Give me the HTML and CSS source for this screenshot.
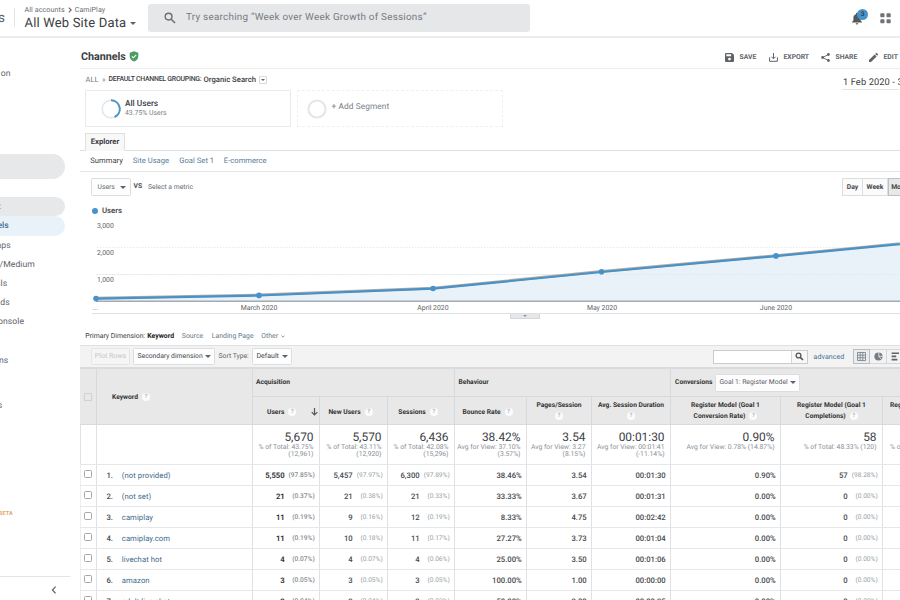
FILE: index.html
```html
<!DOCTYPE html>
<html lang="en">
<head>
<meta charset="utf-8">
<title>Analytics</title>
<link rel="stylesheet" href="styles.css">
</head>
<body>
<header class="top">
  <div class="brand"><span>s</span></div>
  <div class="account">
    <div class="crumb">All accounts <svg width="4" height="6" viewBox="0 0 4 6"><path d="M.8.6 3.2 3 .8 5.4" fill="none" stroke="#5f6368" stroke-width="1.1"/></svg> CamiPlay</div>
    <div class="view">All Web Site Data<i class="caret"></i></div>
  </div>
  <div class="search">
    <svg width="12" height="12" viewBox="0 0 12 12"><circle cx="4.6" cy="4.6" r="3.4" fill="none" stroke="#6b6f73" stroke-width="1.4"/><path d="M7.2 7.2 11 11" stroke="#6b6f73" stroke-width="1.6"/></svg>
    <span>Try searching “Week over Week Growth of Sessions”</span>
  </div>
  <div class="bell">
    <svg width="12" height="13" viewBox="0 0 12 13"><path d="M6 .8c.6 0 1 .4 1 1v.4C8.700 2.600 9.600 4 9.600 5.700V8.600L11 10v.6H1V10L2.400 8.600V5.700C2.400 4 3.300 2.600 5 2.200v-.4c0-.6.4-1 1-1ZM4.700 11.200h2.600a1.300 1.300 0 0 1-2.600 0Z" fill="#54585c"/></svg>
    <b>3</b>
  </div>
  <svg class="apps" width="11" height="11" viewBox="0 0 11 11" fill="#6f7377"><rect x=".3" y=".3" width="4.200" height="4" rx=".8"/><rect x="6.500" y=".3" width="4.200" height="4" rx=".8"/><rect x=".3" y="6.300" width="4.200" height="4" rx=".8"/><rect x="6.500" y="6.300" width="4.200" height="4" rx=".8"/></svg>
</header>
<div class="body">
  <nav class="side">
    <a class="w-on custom">on</a>
    <div class="pill"></div>
    <a class="parent"><span>:</span></a>
    <a class="active">els</a>
    <a class="w-on">aps</a>
    <a class="w-medium">/Medium</a>
    <a class="w-als">als</a>
    <a class="w-ds">ds</a>
    <a class="w-onsole">onsole</a>
    <a class="w-els campaigns">ns</a>
    <a class="w-s last">s</a>
    <em>BETA</em>
    <div class="collapse"><svg width="6" height="8" viewBox="0 0 6 8"><path d="M4.600.7 1.400 4l3.200 3.300" fill="none" stroke="#5f6368" stroke-width="1.2"/></svg></div>
  </nav>
  <main>
    <div class="titlebar">
      <h1>Channels</h1>
      <svg class="shield" width="10" height="11" viewBox="0 0 10 11"><path d="M5 .3 9.300 1.800V5c0 2.700-1.800 4.800-4.300 5.600C2.500 9.800.7 7.700.7 5V1.800Z" fill="#4a9d63"/><path d="M2.900 5.400 4.400 6.800 7.200 3.900" stroke="#fff" stroke-width="1.100" fill="none"/></svg>
      <div class="actions">
        <span class="a-save"><svg width="9" height="9" viewBox="0 0 9 9"><path fill-rule="evenodd" d="M1 0h6l2 2v6a1 1 0 0 1-1 1H1a1 1 0 0 1-1-1V1a1 1 0 0 1 1-1Zm.3 1.200v2h4.800v-2ZM4.500 4.700a1.400 1.400 0 1 0 0 2.800 1.400 1.400 0 0 0 0-2.800Z" fill="#5f6368"/></svg>SAVE</span>
        <span class="a-export"><svg width="9" height="9" viewBox="0 0 9 9"><path d="M4.500 0v5.600M2.400 3.700l2.100 2.100 2.100-2.100M1 4.600H.6v3.700h7.800V4.600H8" fill="none" stroke="#5f6368" stroke-width="1"/></svg>EXPORT</span>
        <span class="a-share"><svg width="9" height="9" viewBox="0 0 9 9"><path d="M7.400 1.500 1.700 4.500l5.700 3" fill="none" stroke="#5f6368" stroke-width=".9"/><circle cx="7.400" cy="1.500" r="1.400" fill="#5f6368"/><circle cx="1.600" cy="4.500" r="1.400" fill="#5f6368"/><circle cx="7.400" cy="7.500" r="1.400" fill="#5f6368"/></svg>SHARE</span>
        <span class="a-edit"><svg width="9" height="9" viewBox="0 0 9 9"><path d="M0 9V7l5.600-5.600 2 2L2 9ZM6.200.9 7 .1q.4-.2.800 0L8.900 1.200q.2.400 0 .8l-.8.8Z" fill="#5f6368"/></svg>EDIT</span>
      </div>
    </div>
    <div class="overview">
      <div class="left">
        <div class="path"><span class="all">ALL</span><span class="raq">»</span><span class="grouping">DEFAULT CHANNEL GROUPING:</span><b>Organic Search</b><span class="drop"><i class="caret"></i></span></div>
        <div class="segments">
          <div class="seg"><svg width="20" height="20" viewBox="0 0 20 20"><circle cx="10" cy="10" r="8.800" fill="none" stroke="#e2e4e6" stroke-width="1.500"/><path d="M10 1.200A8.800 8.800 0 0 1 13.600 18" fill="none" stroke="#4a94c9" stroke-width="2"/></svg><div><strong>All Users</strong><small>43.75% Users</small></div></div>
          <div class="seg add"><svg width="20" height="20" viewBox="0 0 20 20"><circle cx="10" cy="10" r="8.600" fill="none" stroke="#e4e5e6" stroke-width="2"/></svg><span>+ Add Segment</span></div>
        </div>
      </div>
      <div class="date">1 Feb 2020 - 3</div>
    </div>
    <div class="tabs"><span>Explorer</span></div>
    <div class="subnav"><span class="s1">Summary</span><a class="s2">Site Usage</a><a class="s3">Goal Set 1</a><a class="s4">E-commerce</a></div>
    <div class="controls">
      <span class="btn metric">Users<i class="caret"></i></span><b>VS</b><span class="sel">Select a metric</span>
      <div class="period"><span>Day</span><span class="week">Week</span><span class="on">Month</span></div>
    </div>
    <div class="legend"><i></i>Users</div>
    <svg class="chart" width="820" height="95" viewBox="80 218 820 95">
      <g stroke="#e9eaeb" stroke-dasharray="1.500 1.500"><path d="M97 247.500H920M97 274.500H920"/></g>
      <path d="M96 298.500 259 295.300 433 288.500 601.500 271.800 776 255.900 950 239V301H96Z" fill="#e9f1f9"/>
      <path d="M96 274.500H920" stroke="#dadfe4" stroke-dasharray="1.500 1.500" opacity=".6"/>
      <path d="M96 301.300H920" stroke="#a5aab1" stroke-width="1.400"/>
      <path d="M96 298.100 259 294.900 433 288.100 601.500 271.400 776 255.500 950 238.600" fill="none" stroke="#b7aba3" stroke-width="2.600"/>
      <path d="M96 298.700 259 295.500 433 288.700 601.500 272 776 256.100 950 239.200" fill="none" stroke="#4792c8" stroke-width="2.200"/>
      <g fill="#4792c8"><circle cx="96" cy="298.600" r="2.800"/><circle cx="259" cy="295.400" r="2.800"/><circle cx="433" cy="288.500" r="2.800"/><circle cx="601.500" cy="271.800" r="2.800"/><circle cx="776" cy="255.900" r="2.800"/></g>
      <g class="tick"><text x="97" y="228.300">3,000</text><text x="97" y="255.300">2,000</text><text x="97" y="282.300">1,000</text><text x="92.500" y="309.500">...</text></g>
      <g class="tick mid"><text x="259" y="310">March 2020</text><text x="433" y="310">April 2020</text><text x="602" y="310">May 2020</text><text x="776" y="310">June 2020</text></g>
    </svg>
    <div class="handle"><span><i class="caret"></i></span></div>
    <div class="dims"><span class="d0">Primary Dimension:</span><b>Keyword</b><a class="d2">Source</a><a class="d3">Landing Page</a><a class="d4">Other <svg width="4" height="3" viewBox="0 0 4 3"><path d="M.4.6 2 2.200 3.600.6" fill="none" stroke="#6b7a88" stroke-width=".8"/></svg></a></div>
    <div class="toolbar">
      <span class="btn plot">Plot Rows</span><span class="btn second">Secondary dimension<i class="caret"></i></span><span class="sort">Sort Type:</span><span class="btn deflt">Default<i class="caret"></i></span>
      <div class="find"><div></div><span><svg width="9" height="9" viewBox="0 0 9 9"><circle cx="3.500" cy="3.500" r="2.400" fill="none" stroke="#555" stroke-width="1.300"/><path d="M5.300 5.300 8 8" stroke="#555" stroke-width="1.700"/></svg></span></div>
      <a>advanced</a>
      <div class="modes">
        <span class="on"><svg width="9" height="9" viewBox="0 0 9 9"><path d="M.5.500h8v8h-8ZM.5 3.200h8M.5 5.800h8M3.200.5v8M5.800.5v8" fill="none" stroke="#7f868c" stroke-width=".9"/></svg></span>
        <span><svg width="9" height="9" viewBox="0 0 9 9"><circle cx="4.500" cy="4.500" r="4.100" fill="#777c81"/><path d="M4.800.300v4h4M4.800 4.300 7.500 7.500" fill="none" stroke="#f4f4f4" stroke-width=".8"/></svg></span>
        <span><svg width="9" height="9" viewBox="0 0 9 9"><path d="M.6 1.200h7.400M.6 4.400h4.600M.6 7.600h5.800" stroke="#5f6468" stroke-width="1.600"/></svg></span>
      </div>
    </div>
    <div class="thead">
      <div class="chk"><i class="box"></i></div>
      <div class="kw">Keyword<q>?</q></div>
      <div class="grp acq">Acquisition</div>
      <div class="grp beh">Behaviour</div>
      <div class="grp conv">Conversions<span class="btn goal">Goal 1: Register Model<i class="caret"></i></span></div>
      <div class="h users">Users<q>?</q><svg width="7" height="8" viewBox="0 0 7 8"><path d="M3.500 0v6.800M.7 4.200l2.800 2.800 2.800-2.800" fill="none" stroke="#54585c" stroke-width="1.200"/></svg></div>
      <div class="h newu">New Users<q>?</q></div>
      <div class="h newu">Sessions<q>?</q></div>
      <div class="h bounce">Bounce Rate<q>?</q></div>
      <div class="h two"><span>Pages/Session</span><q>?</q></div>
      <div class="h two"><span>Avg. Session Duration</span><q>?</q></div>
      <div class="h two"><span>Register Model (Goal 1</span><span>Conversion Rate)<q>?</q></span></div>
      <div class="h two"><span>Register Model (Goal 1</span><span>Completions)<q>?</q></span></div>
      <div class="h two cut"><span>Reg</span></div>
    </div>
    <div class="row sum">
      <div></div><div></div>
      <div><b>5,670</b><small>% of Total: 43.75%</small><small>(12,961)</small></div>
      <div><b>5,570</b><small>% of Total: 43.11%</small><small>(12,920)</small></div>
      <div><b>6,436</b><small>% of Total: 42.08%</small><small>(15,296)</small></div>
      <div><b>38.42%</b><small>Avg for View: 37.10%</small><small>(3.57%)</small></div>
      <div><b>3.54</b><small>Avg for View: 3.27</small><small>(8.15%)</small></div>
      <div><b>00:01:30</b><small>Avg for View: 00:01:41</small><small>(-11.14%)</small></div>
      <div><b>0.90%</b><small>Avg for View: 0.78% (14.87%)</small></div>
      <div><b>58</b><small>% of Total: 48.33% (120)</small></div>
      <div class="cut"><b>&nbsp;</b><small>% o</small></div>
    </div>
    <div class="row"><div class="c"><i class="box"></i></div><div class="k"><b>1.</b><a>(not provided)</a></div><div class="m">5,550<s>(97.85%)</s></div><div>5,457<s>(97.97%)</s></div><div>6,300<s>(97.89%)</s></div><div>38.46%</div><div>3.54</div><div>00:01:30</div><div>0.90%</div><div>57<s>(98.28%)</s></div><div></div></div>
    <div class="row"><div class="c"><i class="box"></i></div><div class="k"><b>2.</b><a>(not set)</a></div><div class="m">21<s>(0.37%)</s></div><div>21<s>(0.38%)</s></div><div>21<s>(0.33%)</s></div><div>33.33%</div><div>3.67</div><div>00:01:31</div><div>0.00%</div><div>0<s>(0.00%)</s></div><div></div></div>
    <div class="row"><div class="c"><i class="box"></i></div><div class="k"><b>3.</b><a>camiplay</a></div><div class="m">11<s>(0.19%)</s></div><div>9<s>(0.16%)</s></div><div>12<s>(0.19%)</s></div><div>8.33%</div><div>4.75</div><div>00:02:42</div><div>0.00%</div><div>0<s>(0.00%)</s></div><div></div></div>
    <div class="row"><div class="c"><i class="box"></i></div><div class="k"><b>4.</b><a>camiplay.com</a></div><div class="m">11<s>(0.19%)</s></div><div>10<s>(0.18%)</s></div><div>11<s>(0.17%)</s></div><div>27.27%</div><div>3.73</div><div>00:01:04</div><div>0.00%</div><div>0<s>(0.00%)</s></div><div></div></div>
    <div class="row"><div class="c"><i class="box"></i></div><div class="k"><b>5.</b><a>livechat hot</a></div><div class="m">4<s>(0.07%)</s></div><div>4<s>(0.07%)</s></div><div>4<s>(0.06%)</s></div><div>25.00%</div><div>3.50</div><div>00:01:06</div><div>0.00%</div><div>0<s>(0.00%)</s></div><div></div></div>
    <div class="row"><div class="c"><i class="box"></i></div><div class="k"><b>6.</b><a>amazon</a></div><div class="m">3<s>(0.05%)</s></div><div>3<s>(0.05%)</s></div><div>3<s>(0.05%)</s></div><div>100.00%</div><div>1.00</div><div>00:00:00</div><div>0.00%</div><div>0<s>(0.00%)</s></div><div></div></div>
    <div class="row"><div class="c"><i class="box"></i></div><div class="k"><b>7.</b><a>adult live chat</a></div><div class="m">2<s>(0.04%)</s></div><div>2<s>(0.04%)</s></div><div>2<s>(0.03%)</s></div><div>50.00%</div><div>2.00</div><div>00:00:35</div><div>0.00%</div><div>0<s>(0.00%)</s></div><div></div></div>
  </main>
</div>
</body>
</html>
```
FILE: styles.css
```css
* { box-sizing: border-box; }
html, body { margin: 0; height: 600px; overflow: hidden; }
body { width: 900px; background: #fff; color: #3c4043; font: 7.5px/1 Roboto, "Liberation Sans", sans-serif; white-space: nowrap; text-rendering: geometricPrecision; }
svg { display: block; flex: none; }
i.caret { display: inline-block; flex: none; border: 3px solid transparent; border-top: 3px solid #5f6368; border-bottom: 0; }
s, q { text-decoration: none; quotes: none; }
q::before, q::after { content: none; }

/* Top bar */
.top { height: 38px; display: flex; border-bottom: 2px solid #ededee; }
.brand { width: 15px; height: 19px; margin-top: 8px; border-right: 1px solid #e3e4e6; font-size: 13.5px; line-height: 21px; color: #5f6368; }
.brand span { margin-left: -2px; }
.account { width: 133px; padding: 5px 0 0 9.500px; }
.crumb { display: flex; align-items: center; gap: 3px; height: 9px; font-size: 7.1px; letter-spacing: .1px; color: #666b70; }
.view { display: flex; align-items: center; height: 18px; font-size: 13px; letter-spacing: .17px; color: #3c4043; }
.view .caret { margin-left: 4px; }
.search { width: 382px; height: 28px; margin-top: 4px; display: flex; align-items: center; gap: 10px; padding-left: 16px; border-radius: 3px; background: #e6e7e9; color: #757a7f; font-size: 9.9px; letter-spacing: .25px; }
.bell { position: relative; margin: 12px 0 0 321px; width: 18px; }
.bell b { position: absolute; left: 6px; top: -3.500px; width: 11px; height: 11px; border-radius: 50%; background: #4792c8; color: #34434f; font-size: 6.5px; line-height: 11px; text-align: center; }
.apps { margin: 13px 0 0 10.500px; }

.body { display: flex; height: 562px; }

/* Side navigation */
.side { width: 79px; flex: none; display: flex; flex-direction: column; align-items: flex-start; font-size: 8.6px; letter-spacing: .1px; color: #5f6368; }
.side a { height: 19.200px; flex: none; display: flex; align-items: center; justify-content: flex-end; padding-top: 1.500px; }
.side .custom { margin-top: 25.500px; }
.side .w-on { width: 10.700px; }
.side .w-els { width: 8.300px; }
.side .w-medium { width: 35px; }
.side .w-als { width: 7.300px; }
.side .w-ds { width: 9.800px; }
.side .w-onsole { width: 24.200px; }
.side .w-s { width: 2.200px; }
.pill { width: 65px; height: 25px; flex: none; margin-top: 71.500px; border-radius: 0 13px 13px 0; background: #e7e8e9; }
.side .parent { width: 65px; margin-top: 18px; justify-content: flex-start; border-radius: 0 10px 10px 0; background: #e7e8e9; }
.parent span { margin-left: -1px; }
.side .active { width: 65px; border-radius: 0 10px 10px 0; background: #e9f1f9; color: #3d6f96; font-weight: 500; letter-spacing: -.1px; padding-right: 56.500px; }
.side .campaigns { margin-top: 19px; }
.side .last { margin-top: 26.500px; }
.side em { width: 12.700px; height: 6px; flex: none; margin-top: 96px; display: flex; justify-content: flex-end; font: 700 5.5px/6px Roboto, sans-serif; color: #e5a76c; }
.collapse { width: 70px; margin-top: 58.500px; border-top: 1px solid #e3e4e6; padding: 9px 0 0 51px; }

/* Report header */
main { width: 821px; flex: none; overflow: hidden; padding-left: 1px; }
.titlebar { height: 31px; display: flex; align-items: center; border-bottom: 1px solid #ececec; padding: 7px 0 0 1px; }
h1 { width: 45px; margin: 1px 0 0; font-size: 10.800px; font-weight: 700; letter-spacing: -.05px; color: #3c4043; }
.shield { margin-left: 3px; margin-top: -1px; }
.actions { display: flex; flex: none; margin-left: 585.500px; padding-top: 1px; font-size: 6.8px; font-weight: 700; color: #5f6368; }
.actions span { display: flex; align-items: center; gap: 6px; }
.a-save { width: 44px; }
.a-export { width: 52px; }
.a-share { width: 48px; }
.overview { height: 64px; display: flex; }
.left { width: 763px; flex: none; }
.path { height: 21px; display: flex; align-items: center; padding-left: 5.500px; font-size: 7.5px; }
.path > * { flex: none; }
.all { width: 16.500px; color: #757a7f; }
.raq { width: 6.500px; color: #757a7f; }
.grouping { width: 95px; font-weight: 500; font-size: 6.900px; letter-spacing: -.22px; }
.path b { width: 55px; font-weight: 500; font-size: 7.7px; }
.path .drop { width: 8px; height: 8px; display: grid; place-items: center; border: 1px solid #d8d9da; border-radius: 1px; }
.drop .caret { border-width: 2px 2px 0; }
.segments { display: flex; gap: 6px; padding-left: 5px; }
.seg { width: 206px; height: 37px; display: flex; align-items: center; gap: 4.500px; padding-left: 14.500px; border: 1px solid #e8e9ea; border-radius: 1px; }
.seg strong { display: block; font-size: 8.3px; font-weight: 500; line-height: 9px; margin-top: 1px; }
.seg small { display: block; font-size: 6.900px; line-height: 9px; color: #757f87; }
.seg.add { border: 1px dashed #f0f0f0; padding-left: 9px; font-size: 8.3px; color: #75818b; letter-spacing: .1px; }
.seg.add span { margin-top: -2px; }
.date { width: 57px; height: 21px; padding: 8.500px 0 0 1px; margin-left: -1px; border-bottom: 1px solid #e5e5e5; font-size: 9.300px; letter-spacing: .1px; flex: none; }
.tabs { height: 18px; display: flex; padding-left: 5px; border-bottom: 1px solid #dedfe0; }
.tabs span { width: 40px; height: 18px; display: grid; place-items: center; background: #f8f8f8; border: 1px solid #dedfe0; border-bottom-color: #f8f8f8; font-size: 7.7px; font-weight: 700; }
.subnav { height: 21px; display: flex; align-items: center; padding-left: 10.300px; border-bottom: 1px solid #e4e5e6; font-size: 7.600px; color: #3c4043; letter-spacing: .03px; }
.subnav a { color: #587d99; }
.s1 { width: 42.500px; }
.s2 { width: 46.500px; }
.s3 { width: 44.500px; }

/* Chart */
.btn { display: flex; align-items: center; justify-content: space-between; border: 1px solid #dcdddf; border-radius: 1.5px; background: #fdfdfd; }
.controls { height: 31px; display: flex; align-items: center; padding: 0 0 1px 11px; font-size: 6.800px; color: #5f6b75; }
.controls > * { flex: none; }
.metric { width: 40px; height: 18px; padding: 0 4px 0 5.500px; }
.controls b { margin: -1px 0 0 2.500px; width: 14.500px; color: #4b4f53; }
.sel { width: 600px; }
.period { display: flex; height: 18px; margin-left: 94px; font-weight: 700; color: #44484c; }
.period span { width: 21px; display: grid; place-items: center; border: 1px solid #dcdddf; background: #fbfbfb; flex: none; }
.period .week { width: 25px; border-left: 0; }
.period .on { width: 26px; background: #e6e8ea; border-color: #bcc1c6; }
.legend { height: 15px; display: flex; align-items: center; padding-left: 11.500px; font-size: 7.8px; font-weight: 500; }
.legend i { width: 6px; height: 6px; margin-right: 4.500px; border-radius: 50%; background: #4792c8; }
.chart { overflow: hidden; }
.tick text { font: 6.900px Roboto, sans-serif; fill: #5f6368; }
.mid text { text-anchor: middle; }
.handle { height: 14px; margin-left: 12px; padding-left: 418px; border-top: 1px solid #e0e1e3; }
.handle span { width: 30px; height: 5px; display: grid; place-items: center; background: #e5e7e9; border: 1px solid #d5d7da; border-top: 0; }
.handle .caret { border-width: 2px 2px 0; border-top-color: #8b959d; }

/* Table toolbar */
.dims { height: 18px; display: flex; align-items: center; padding: 1.500px 0 0 5.300px; font-size: 6.900px; color: #3c4043; }
.dims a { color: #66798a; }
.d0 { width: 62px; }
.dims b { width: 34.500px; font-size: 6.900px; color: #222; }
.d2 { width: 30px; }
.d3 { width: 49.500px; }
.d4 { display: flex; align-items: center; gap: 3px; }
.toolbar { height: 22px; display: flex; align-items: center; padding-left: 11px; border-top: 1px solid #e0e0e0; background: #f3f3f3; font-size: 7px; color: #5f6368; }
.toolbar > * { flex: none; }
.toolbar .btn { height: 17px; }
.toolbar .plot { width: 39px; justify-content: center; color: #c5c7c9; background: #f5f5f5; border-color: #e5e5e5; }
.second { width: 82px; margin-left: 3px; padding: 0 3.500px; color: #44484c; font-size: 6.800px; }
.sort { margin-left: 3.500px; width: 33.500px; font-size: 6.800px; }
.deflt { width: 40px; padding: 0 3.500px; color: #44484c; }
.find { display: flex; width: 95px; height: 14px; margin-left: 421px; border: 1px solid #c9cccf; background: #fff; }
.find div { width: 78px; border-right: 1px solid #d5d7da; }
.find span { flex: 1; display: grid; place-items: center; background: #f8f8f8; }
.toolbar a { width: 39.500px; margin-left: 5.500px; padding-top: 1px; color: #3f7194; letter-spacing: .1px; }
.modes { display: flex; }
.modes span { width: 17px; height: 15px; display: grid; place-items: center; border: 1px solid #d5d7da; border-left: 0; flex: none; }
.modes .on { border: 1px solid #b8bec4; background: #e9edf0; }

/* Data table: the header and the rows share one set of column tracks */
.thead, .row { display: grid; width: 872px; grid-template-columns: 16px 156px 67px 68px 67px 72px 65px 79px 110px 102px 70px; }
.thead { height: 58px; grid-template-rows: 27px 29px; background: #e8e8e8; border-top: 2px solid #dbdbdb; border-bottom: 1px solid #d9dadb; font-size: 6.700px; font-weight: 700; color: #333; }
.thead > div { border-left: 1px solid #d7dadd; display: flex; align-items: center; }
.thead .chk { grid-row: 1 / 3; grid-column: 1; justify-content: center; border: 0; }
.thead .kw { grid-row: 1 / 3; grid-column: 2; padding-left: 15px; }
.grp.acq { grid-column: 3 / 6; padding-left: 3px; padding-bottom: 1px; }
.grp.beh { grid-column: 6 / 9; padding-left: 3.500px; padding-bottom: 1px; }
.grp.conv { grid-column: 9 / 12; padding-left: 4px; }
.goal { width: 85px; height: 18px; margin-left: 3px; padding: 0 3px; font-size: 6.800px; font-weight: 400; color: #5f6368; }
.thead .h { grid-row: 2; border-top: 1px solid #d7dadd; justify-content: center; padding: 2px 2px 0 0; }
.thead .users { grid-column: 3; padding-left: 14px; justify-content: flex-start; }
.users svg { margin-left: 15px; }
.thead .newu { padding-right: 6px; }
.thead .bounce { padding-right: 6px; }
.thead .two { flex-direction: column; justify-content: flex-start; padding: 4px 0 0; line-height: 9px; gap: 1.500px; }
.two span { display: flex; align-items: center; }
.thead .cut { align-items: flex-start; padding: 4px 0 0 7px; }
.thead q { width: 8px; height: 8px; margin-left: 4px; border-radius: 50%; background: #fbfbfb; color: #b5b9bc; font-size: 6px; line-height: 8px; text-align: center; flex: none; }
.two > q { margin: 0; }
.box { width: 8px; height: 8px; border: 1px solid #a3a8ad; border-radius: 1.500px; background: #fff; }
.chk .box { background: none; border-color: #cfd1d3; border-radius: 0; }
.row { height: 21px; border-top: 1px solid #e6e7e8; font-size: 7.700px; font-weight: 500; color: #44494e; }
.row > div { display: flex; align-items: center; justify-content: flex-end; padding: 1px 4.300px 0 0; border-left: 1px solid #dfe1e2; }
.row > .c { justify-content: center; padding: 0 2px 2px 0; border-color: #eeeeee; }
.row s { width: 30px; text-align: right; font-size: 6.600px; font-weight: 400; color: #989fa4; }
.row .m { font-weight: 700; color: #33373b; }
.row .m s { font-weight: 500; color: #858b90; }
.row > .k { justify-content: flex-start; }
.k b { width: 15.300px; margin-left: 9.500px; font-weight: 500; }
.k a { font-weight: 400; color: #41698a; letter-spacing: .06px; }
.row.sum { height: 39px; border: 0; }
.sum > div { flex-direction: column; align-items: flex-end; justify-content: flex-start; padding: 5px 5.500px 0 0; }
.sum b { font-size: 11.900px; line-height: 14px; font-weight: 400; color: #3c4043; }
.sum small { font-size: 6.800px; line-height: 7px; font-weight: 400; color: #899097; }
.sum > .cut { align-items: flex-start; padding-left: 7px; }
```
